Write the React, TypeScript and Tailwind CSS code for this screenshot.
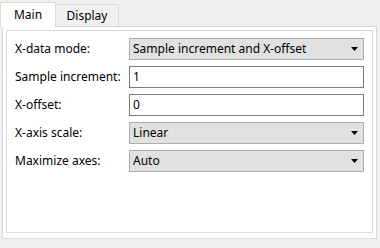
import React from 'react';

const rows = [
  { label: 'X-data mode:', kind: 'select', value: 'Sample increment and X-offset' },
  { label: 'Sample increment:', kind: 'text', value: '1' },
  { label: 'X-offset:', kind: 'text', value: '0' },
  { label: 'X-axis scale:', kind: 'select', value: 'Linear' },
  { label: 'Maximize axes:', kind: 'select', value: 'Auto' },
];

const Caret: React.FC = () => (
  <svg width="7" height="4" viewBox="0 0 7 4" className="shrink-0">
    <path d="M0 0 H7 L3.5 4 Z" fill="#000" />
  </svg>
);

export default function App() {
  return (
    <div
      className="w-[380px] h-[248px] bg-[#f0f0f0] pt-[2px] pl-[2px] pr-[3px] text-[12px] text-black"
      style={{ fontFamily: '"Noto Sans", "Open Sans", sans-serif' }}
    >
      {/* Tabs */}
      <div className="flex items-end h-[25px] -mb-px relative z-10">
        <div className="-ml-[2px] w-[56px] h-[25px] bg-white border border-[#d9d9d9] border-b-0 flex justify-center pt-[4px] leading-[16px]">
          Main
        </div>
        <div className="w-[63px] h-[22px] mb-px bg-[#f0f0f0] border border-[#d9d9d9] border-l-0 border-b-0 flex justify-center pt-[3px] leading-[16px]">
          Display
        </div>
      </div>

      {/* Pane */}
      <div className="h-[213px] bg-white border border-[#d9d9d9] p-[3px] pb-[5px]">
        <div className="h-full border border-[#dadada] pt-[7px] px-[8px]">
          <div className="grid grid-cols-[114px_1fr] gap-y-[6px]">
            {rows.map((r) => (
              <React.Fragment key={r.label}>
                <div className="h-[22px] flex items-center">{r.label}</div>
                {r.kind === 'select' ? (
                  <div className="h-[22px] bg-[#e1e1e1] border border-[#adadad] flex items-center pl-[3px] pr-[5px]">
                    <span className="flex-1 truncate">{r.value}</span>
                    <Caret />
                  </div>
                ) : (
                  <div className="h-[22px] bg-white border border-[#7a7a7a] flex items-center pl-[3px]">
                    {r.value}
                  </div>
                )}
              </React.Fragment>
            ))}
          </div>
        </div>
      </div>
    </div>
  );
}
